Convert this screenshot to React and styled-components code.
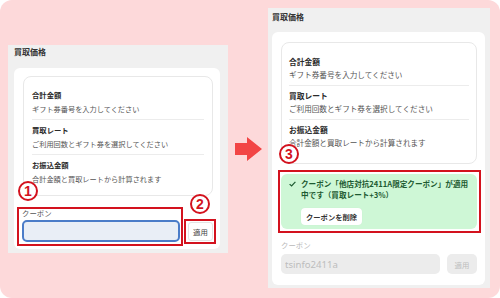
import React from 'react';
import styled, { createGlobalStyle } from 'styled-components';

const Global = createGlobalStyle`
  html, body { margin: 0; padding: 0; background: #ffffff; }
  body { font-family: "Noto Sans CJK JP", "Noto Sans", sans-serif; }
  * { box-sizing: border-box; }
`;

const Canvas = styled.div`
  width: 500px;
  height: 298px;
  background: #fdd9da;
  border-radius: 12px;
  display: flex;
  align-items: flex-start;
  padding: 8px 0 0 8px;
  overflow: hidden;
`;

const Shot = styled.section`
  width: ${p => p.$w}px;
  height: ${p => p.$h}px;
  margin-top: ${p => p.$mt}px;
  padding: ${p => p.$pad};
  background: #f0f0f0;
  display: flex;
  flex-direction: column;
  font-size: ${p => p.$fs}px;
`;

const Title = styled.h2`
  margin: 0;
  padding-left: ${p => p.$indent}px;
  font-size: 8px;
  line-height: 14px;
  font-weight: 700;
  color: #333;
`;

const Card = styled.div`
  flex: 1;
  margin-top: ${p => p.$mt}px;
  padding: ${p => p.$pad};
  background: #ffffff;
  border-radius: 6px;
  display: flex;
  flex-direction: column;
`;

const Summary = styled.div`
  border: 1px solid #e8e8e8;
  border-radius: 8px;
  padding: ${p => p.$pad};
  display: flex;
  flex-direction: column;
`;

const Row = styled.div`
  padding: 4px 0;
  & + & { border-top: 1px solid #ececec; }
`;

const RowLabel = styled.div`
  font-size: 1.02em;
  line-height: 12px;
  font-weight: 700;
  color: #2a2a2a;
`;

const RowValue = styled.div`
  margin-top: ${p => p.$gap}px;
  font-size: 1em;
  line-height: 12px;
  color: #555;
  white-space: nowrap;
`;

const Field = styled.div`
  position: relative;
  margin-top: ${p => p.$mt}px;
`;

const FieldLabel = styled.div`
  font-size: 7.4px;
  line-height: 10px;
  color: ${p => (p.$disabled ? '#b9b9b9' : '#555')};
`;

const FieldRow = styled.div`
  display: flex;
  align-items: center;
  gap: ${p => p.$gap}px;
  margin-top: ${p => p.$mt}px;
`;

const InputWrap = styled.div`
  position: relative;
  flex: 1;
`;

const Input = styled.input`
  display: block;
  width: 100%;
  height: ${p => p.$h}px;
  margin: 0;
  padding: 0 4px;
  border-radius: 5px;
  font-family: "Noto Sans", "Liberation Sans", sans-serif;
  font-size: 9.6px;
  color: #bdbdbd;
  outline: none;
  border: ${p => (p.$focus ? '2px solid #4b7cc8' : '0')};
  background: ${p => (p.$focus ? '#e9eef6' : '#ececec')};
`;

const ApplyWrap = styled.div`
  position: relative;
`;

const ApplyButton = styled.button`
  display: block;
  width: ${p => p.$w}px;
  height: ${p => p.$h}px;
  padding: 0;
  margin: 0;
  border-radius: ${p => (p.$disabled ? 5 : 3)}px;
  border: ${p => (p.$disabled ? '0' : '1px solid #e4e4e4')};
  background: ${p => (p.$disabled ? '#ececec' : '#ffffff')};
  color: ${p => (p.$disabled ? '#bdbdbd' : '#444')};
  font-family: "Noto Sans CJK JP", sans-serif;
  font-size: 7.4px;
`;

const Highlight = styled.div`
  position: absolute;
  top: ${p => p.$t}px;
  right: ${p => p.$r}px;
  bottom: ${p => p.$b}px;
  left: ${p => p.$l}px;
  border: 2px solid #d3121e;
  pointer-events: none;
`;

const Badge = styled.div`
  position: absolute;
  top: ${p => p.$t}px;
  left: ${p => p.$l}px;
  width: 20px;
  height: 20px;
  border-radius: 50%;
  border: 2px solid #d3121e;
  background: #ffffff;
  color: #d3121e;
  font-family: "Liberation Sans", Arial, sans-serif;
  font-weight: 700;
  font-size: 14px;
  line-height: 16px;
  text-align: center;
`;

const ArrowCol = styled.div`
  width: 40px;
  padding: 129px 0 0 7px;
`;

const Notice = styled.div`
  position: relative;
  margin-top: 10px;
  background: #cef7d6;
  border-radius: 6px;
  padding: 4px 6px 4px 8px;
`;

const NoticeText = styled.div`
  display: flex;
  align-items: flex-start;
  gap: 5px;
  font-size: 7.6px;
  line-height: 11px;
  font-weight: 700;
  color: #1d5a31;
`;

const CheckMark = styled.svg`
  flex: none;
  margin-top: 3px;
`;

const RemoveButton = styled.button`
  display: block;
  height: 17px;
  margin: 8px 0 0 12px;
  padding: 0 5px;
  border: 0;
  border-radius: 4px;
  background: #ffffff;
  color: #333;
  font-family: "Noto Sans CJK JP", sans-serif;
  font-size: 7.3px;
  font-weight: 700;
  box-shadow: 0 0 1px rgba(0,0,0,0.08);
`;

const rows = [
  ['合計金額', 'ギフト券番号を入力してください'],
  ['買取レート', 'ご利用回数とギフト券を選択してください'],
  ['お振込金額', '合計金額と買取レートから計算されます'],
];

function SummaryList({ pad, gap }) {
  return (
    <Summary $pad={pad}>
      {rows.map(([l, v]) => (
        <Row key={l}>
          <RowLabel>{l}</RowLabel>
          <RowValue $gap={gap}>{v}</RowValue>
        </Row>
      ))}
    </Summary>
  );
}

export default function App() {
  return (
    <>
      <Global />
      <Canvas>
        <Shot $w={220} $h={208} $mt={37} $pad="0 8px 5px 6px" $fs={7.2}>
          <Title $indent={0}>買取価格</Title>
          <Card $mt={9} $pad="8px 7px 7px 9px">
            <SummaryList pad="8px 8px 6px" gap={2} />
            <FieldRow $gap={8} $mt={0} style={{ alignItems: 'flex-end' }}>
              <Field $mt={12} style={{ flex: 1, marginLeft: -1 }}>
                <FieldLabel>クーポン</FieldLabel>
                <InputWrap style={{ marginTop: 2 }}>
                  <Input $focus $h={22} readOnly value="" />
                </InputWrap>
                <Highlight $t={-1} $r={-3} $b={-4} $l={-5} />
                <Badge $t={-27} $l={-4}>1</Badge>
              </Field>
              <ApplyWrap style={{ marginBottom: 1 }}>
                <ApplyButton $w={25} $h={19}>適用</ApplyButton>
                <Highlight $t={-3} $r={-3} $b={-3} $l={-4} />
                <Badge $t={-28} $l={2}>2</Badge>
              </ApplyWrap>
            </FieldRow>
          </Card>
        </Shot>

        <ArrowCol>
          <svg width="27" height="24" viewBox="0 0 27 24">
            <polygon points="0,6 12,6 12,0 27,12 12,24 12,18 0,18" fill="#f24545" />
          </svg>
        </ArrowCol>

        <Shot $w={222} $h={280} $mt={0} $pad="2px 5px 3px 4px" $fs={7.6}>
          <Title $indent={0}>買取価格</Title>
          <Card $mt={8} $pad="10px 8px 7px 9px">
            <SummaryList pad="9px 7px 10px" gap={1} />
            <Notice>
              <NoticeText>
                <CheckMark width="7" height="6" viewBox="0 0 7 6">
                  <path d="M0.6 3.1 L2.6 5 L6.4 0.9" fill="none" stroke="#1d5a31" strokeWidth="1.2" />
                </CheckMark>
                <span>クーポン「他店対抗2411A限定クーポン」が適用中です（買取レート+3%）</span>
              </NoticeText>
              <RemoveButton>クーポンを削除</RemoveButton>
              <Highlight $t={-4} $r={-4} $b={-4} $l={-3} />
              <Badge $t={-30} $l={-2}>3</Badge>
            </Notice>
            <Field $mt={11}>
              <FieldLabel $disabled>クーポン</FieldLabel>
              <FieldRow $gap={7} $mt={4}>
                <InputWrap>
                  <Input $h={20} disabled value="tsinfo2411a" readOnly />
                </InputWrap>
                <ApplyButton $disabled disabled $w={30} $h={20}>適用</ApplyButton>
              </FieldRow>
            </Field>
          </Card>
        </Shot>
      </Canvas>
    </>
  );
}
